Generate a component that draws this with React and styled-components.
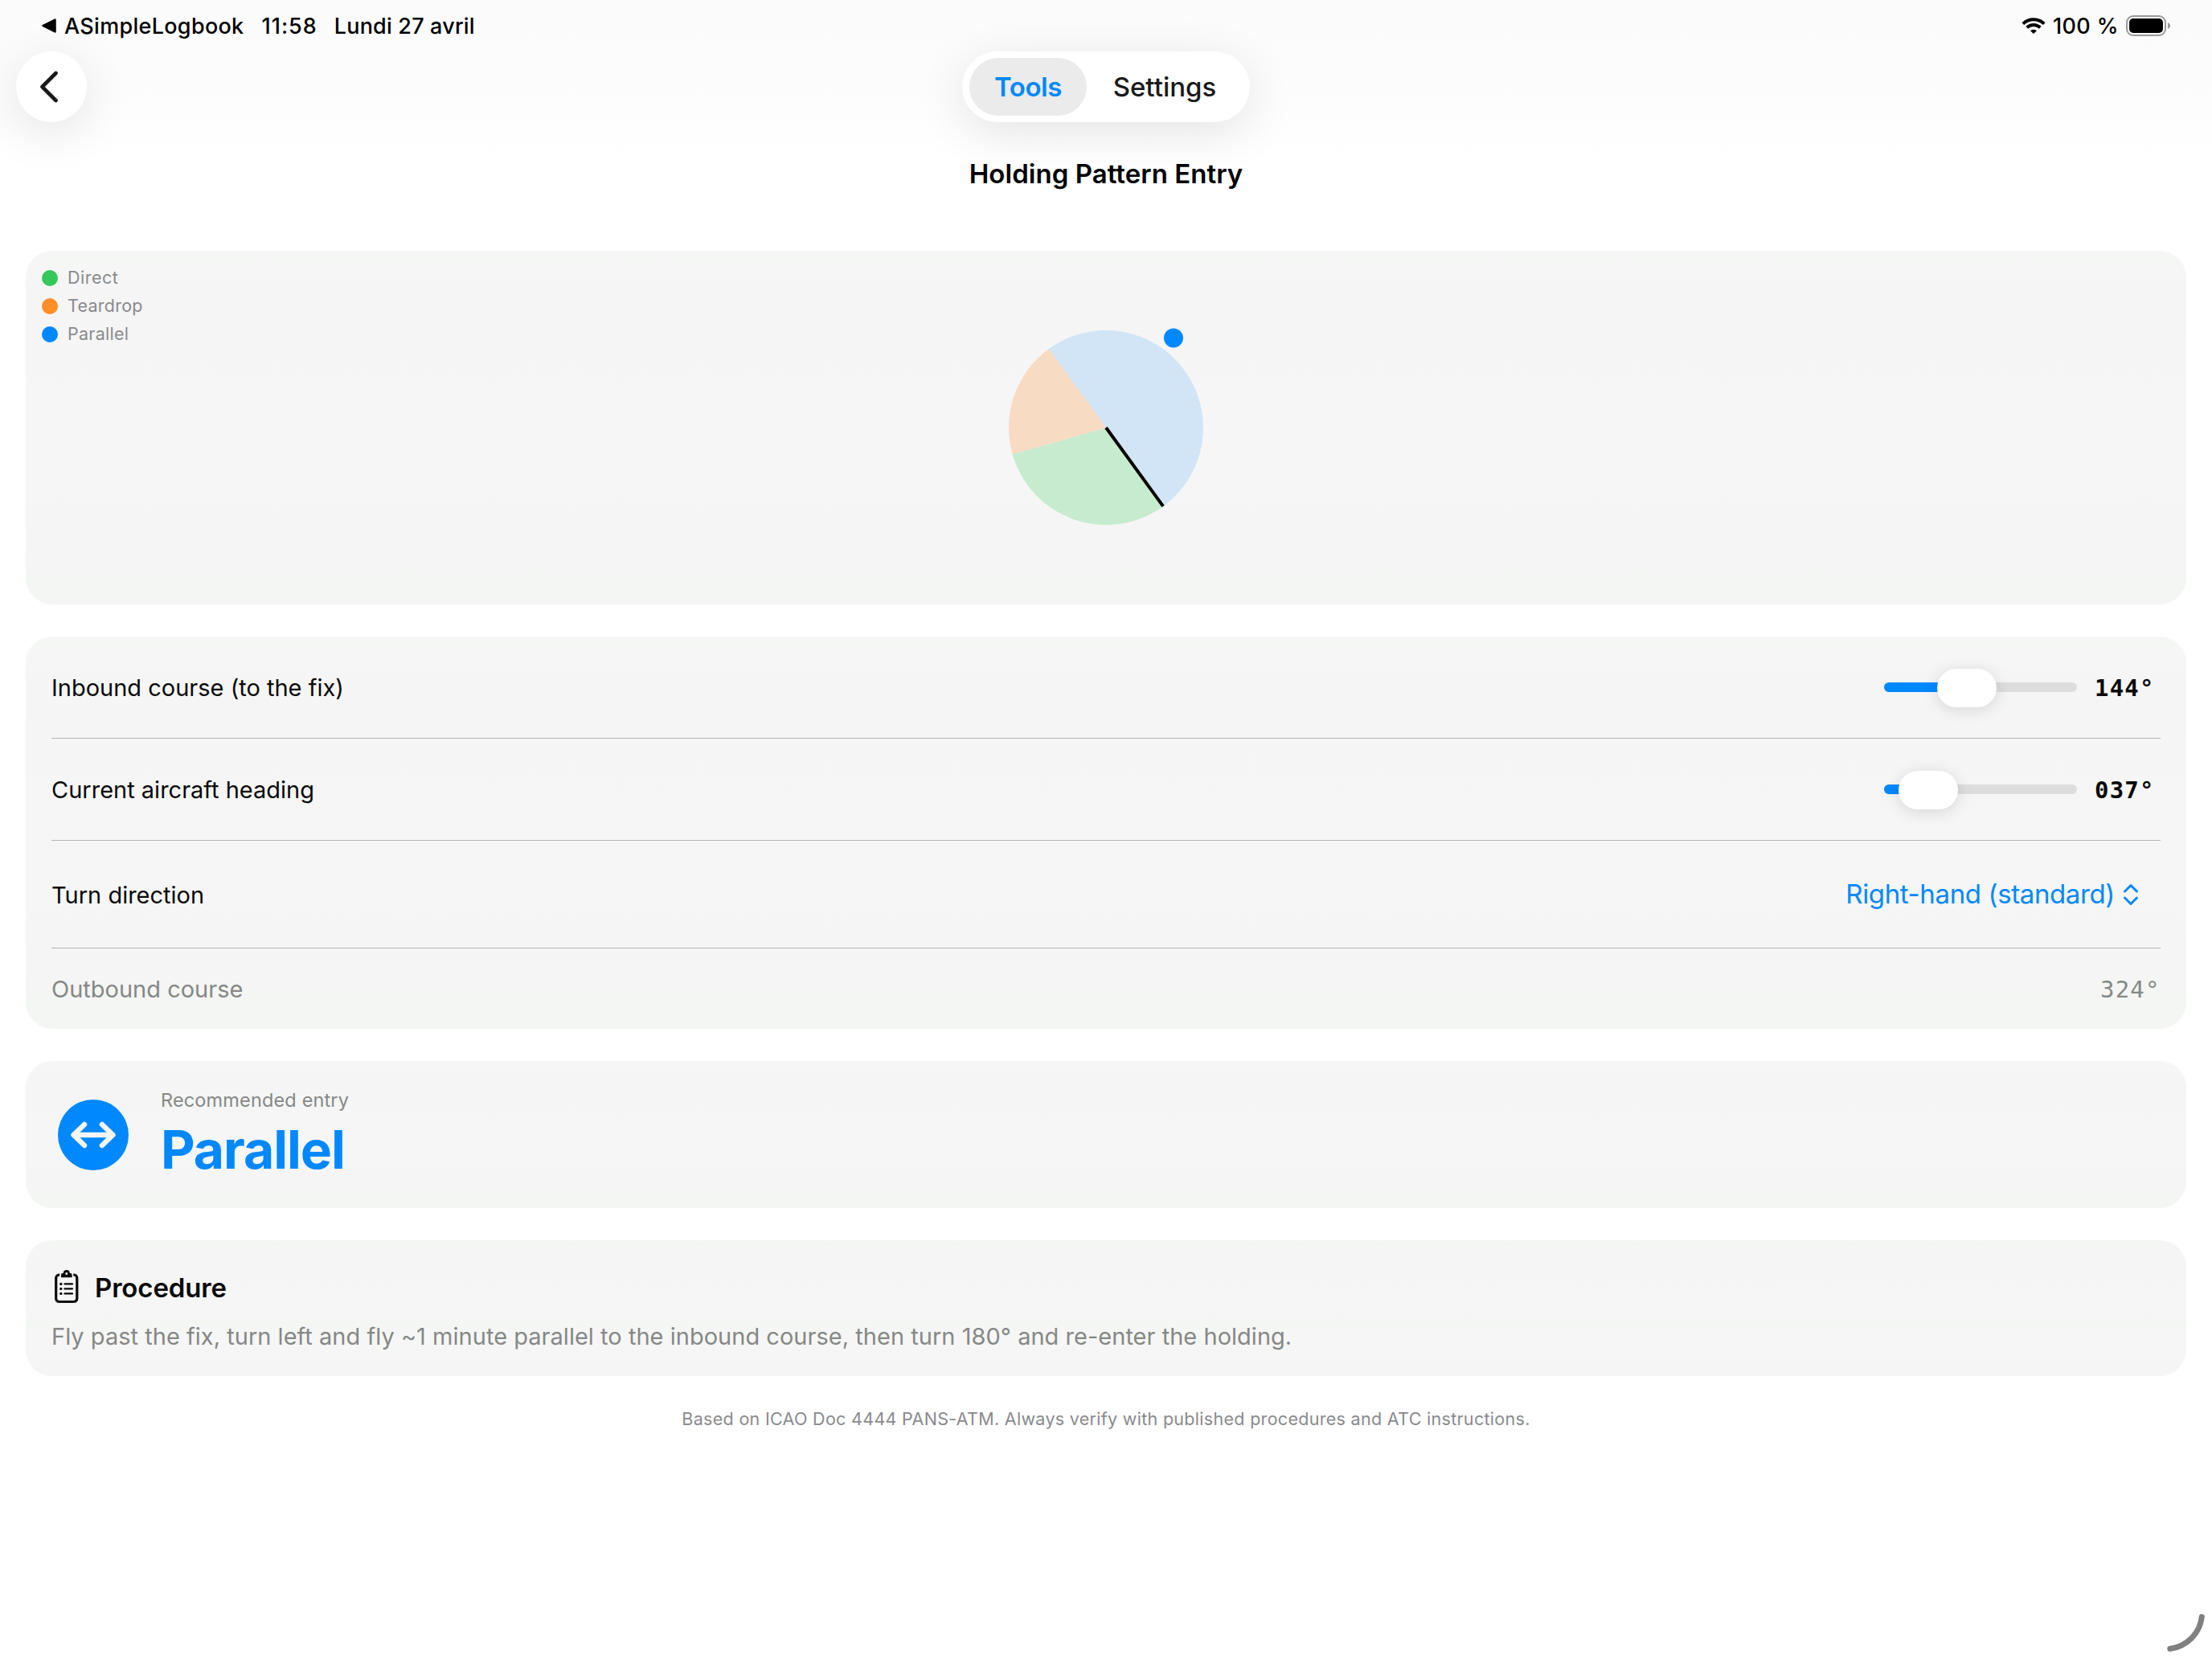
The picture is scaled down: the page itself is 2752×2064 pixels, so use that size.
import React from 'react';
import styled, { createGlobalStyle } from 'styled-components';

const GlobalStyle = createGlobalStyle`
    * {
        box-sizing: border-box;
    }

    body {
        margin: 0;
        background-color: #ffffff;
        font-family: Inter, "Liberation Sans", sans-serif;
        color: #0a0a0a;
    }
`;

const Screen = styled.div`
    width: 2752px;
    height: 2064px;
    position: relative;
    overflow: hidden;
    display: flex;
    flex-direction: column;
    background: linear-gradient(#fbfbfb 0, #fcfcfc 100px, #ffffff 200px);
`;

const Text = styled.span`
    padding-top: ${props => props.$drop ?? 2}px;
    font-size: ${props => props.$size || 29}px;
    font-weight: ${props => props.$weight || 400};
    letter-spacing: ${props => props.$track || 0}px;
    color: ${props => props.$color || 'inherit'};
    line-height: 1.2;
    white-space: nowrap;
`;

const StatusBar = styled.div`
    height: 64px;
    padding: 0 52px;
    display: flex;
    align-items: center;
    color: #000000;
`;

const StatusGroup = styled.div`
    display: flex;
    align-items: center;
    gap: ${props => props.$gap}px;
    margin-right: ${props => props.$after || 0}px;
`;

const Spacer = styled.div`
    flex: 1;
`;

const NavBar = styled.div`
    height: 88px;
    padding: 0 20px;
    display: grid;
    grid-template-columns: 1fr auto 1fr;
`;

const BackButton = styled.button`
    width: 88px;
    height: 88px;
    padding: 0 6px 0 0;
    border: none;
    border-radius: 50%;
    background-color: #ffffff;
    box-shadow: 0 14px 60px rgba(0, 0, 0, 0.1);
    display: flex;
    align-items: center;
    justify-content: center;
`;

const Segmented = styled.div`
    width: 358px;
    padding: 8px 9px;
    border-radius: 44px;
    background-color: #ffffff;
    box-shadow: 0 14px 60px rgba(0, 0, 0, 0.1);
    display: flex;
`;

const Segment = styled.div`
    width: ${props => props.$width}px;
    border-radius: 36px;
    background-color: ${props => props.$active ? '#ebebeb' : 'transparent'};
    color: ${props => props.$active ? '#0088ff' : '#1a1a1a'};
    display: flex;
    align-items: center;
    justify-content: center;
`;

const Title = styled.div`
    height: 128px;
    display: flex;
    align-items: center;
    justify-content: center;
    color: #000000;
`;

const Content = styled.div`
    padding: 32px 32px 0;
    display: flex;
    flex-direction: column;
`;

const Card = styled.div`
    height: ${props => props.$height}px;
    margin-bottom: 40px;
    border-radius: 33px;
    background: linear-gradient(#f5f7f5, #f5f5f5 12%, #f6f6f6 60%, #f5f5f5 82%, #f3f6f3);
`;

const DiagramCard = styled(Card)`
    position: relative;
    display: flex;
    align-items: center;
    justify-content: center;
`;

const Legend = styled.div`
    position: absolute;
    top: 24px;
    left: 20px;
    display: flex;
    flex-direction: column;
    gap: 15px;
`;

const LegendItem = styled.div`
    height: 20px;
    display: flex;
    align-items: center;
    gap: 12px;
`;

const Dot = styled.span`
    width: 20px;
    height: 20px;
    border-radius: 50%;
    background-color: ${props => props.$color};
`;

const FormCard = styled(Card)`
    padding: 0 32px;
`;

const Row = styled.div`
    height: ${props => props.$height}px;
    padding-right: ${props => props.$inset || 0}px;
    border-bottom: ${props => props.$last ? 'none' : '1px solid #b5b5b5'};
    color: ${props => props.$muted ? '#868886' : '#0a0a0a'};
    display: flex;
    align-items: center;
    justify-content: space-between;
`;

const RowControl = styled.div`
    display: flex;
    align-items: center;
    gap: ${props => props.$gap}px;
`;

const Track = styled.div`
    position: relative;
    width: 240px;
    height: 12px;
    border-radius: 6px;
    background-color: #dddddd;
`;

const Fill = styled.div`
    height: 12px;
    border-radius: 6px;
    background-color: #0088ff;
`;

const Thumb = styled.div`
    position: absolute;
    top: -17px;
    width: 74px;
    height: 48px;
    border-radius: 24px;
    background-color: #ffffff;
    box-shadow: 0 3px 20px rgba(0, 0, 0, 0.13);
`;

const Degrees = styled(Text)`
    width: 74px;
    font-family: "DejaVu Sans Mono", monospace;
    letter-spacing: 1.2px;
`;

const EntryCard = styled(Card)`
    padding: 0 40px;
    display: flex;
    align-items: center;
    gap: 40px;
`;

const EntryText = styled.div`
    display: flex;
    flex-direction: column;
    gap: 6px;
    color: #868886;
`;

const ProcedureCard = styled(Card)`
    padding: 36px 32px 0;
    margin-bottom: 0;
    background: linear-gradient(#f4f6f4, #f5f5f5 20%, #f6f6f6 45%, #f4f6f4 60%, #f6f6f6 75%, #f5f5f5);
`;

const ProcedureHead = styled.div`
    height: 44px;
    padding-left: 4px;
    display: flex;
    align-items: center;
    gap: 20px;
`;

const ProcedureBody = styled.div`
    margin-top: 21px;
    display: flex;
    color: #868886;
`;

const Footnote = styled.div`
    margin-top: 39px;
    display: flex;
    justify-content: center;
    color: #8a8a8e;
`;

const ResizeHandle = styled.svg`
    position: absolute;
    right: 0;
    bottom: 0;
`;

const legend = [
    { name: 'Direct', color: '#34c759', track: 0.5 },
    { name: 'Teardrop', color: '#ff8d28', track: 0.25 },
    { name: 'Parallel', color: '#0088ff', track: 0.25 },
];

const INBOUND = 144;
const HEADING = 37;

const point = (deg, r) => {
    const a = (deg - 90) * Math.PI / 180;
    return [150 + r * Math.cos(a), 150 + r * Math.sin(a)];
}

const sector = (from, to) => {
    const [x1, y1] = point(from, 121);
    const [x2, y2] = point(to, 121);
    return `M150 150 L${x1} ${y1} A121 121 0 0 1 ${x2} ${y2} Z`;
}

const HoldingDiagram = () => {
    const [lx, ly] = point(INBOUND, 121);
    const [hx, hy] = point(HEADING, 139.5);
    return (
        <svg width="300" height="300" viewBox="0 0 300 300">
            <path d={sector(INBOUND + 180, INBOUND + 360)} fill="#d1e5f6" />
            <path d={sector(INBOUND, INBOUND + 110)} fill="#c6ebcf" />
            <path d={sector(INBOUND + 110, INBOUND + 180)} fill="#f8dbc3" />
            <line x1="150" y1="150" x2={lx} y2={ly} stroke="#000" strokeWidth="4" />
            <circle cx={hx} cy={hy} r="12" fill="#0088ff" />
        </svg>
    )
}

const Slider = ({ value }) => {
    // the thumb stops slightly short of both ends of the track
    const left = Math.round(1.4 + value / 360 * 161.5);
    return (
        <Track>
            <Fill style={{ width: left + 37 }} />
            <Thumb style={{ left }} />
        </Track>
    )
}

const WifiIcon = () => (
    <svg width="30" height="22" viewBox="0 0 30 22" fill="none" stroke="#000" strokeWidth="4">
        <path d="M1.8 8.6 A19 19 0 0 1 28.2 8.6" />
        <path d="M6.7 13.3 A12 12 0 0 1 23.3 13.3" />
        <path d="M15 21 L11 17.2 A6 6 0 0 1 19 17.2 Z" fill="#000" stroke="none" />
    </svg>
)

const BatteryIcon = () => (
    <svg width="55" height="26" viewBox="0 0 55 26">
        <rect x="1" y="1" width="48" height="24" rx="8" fill="none" stroke="#9a9a9a" strokeWidth="2" />
        <rect x="4" y="4" width="42" height="18" rx="5" fill="#000" />
        <path d="M52 9 C56 10.5 56 15.5 52 17 Z" fill="#9a9a9a" />
    </svg>
)

const ClipboardIcon = () => (
    <svg width="30" height="42" viewBox="0 0 30 42">
        <path d="M6.2 6 H5.5 A4 4 0 0 0 1.7 10 V35.5 A4 4 0 0 0 5.7 39.5 H23.8 A4 4 0 0 0 27.8 35.5 V10 A4 4 0 0 0 24 6 H23.3" fill="none" stroke="#0a0a0a" strokeWidth="3.2" />
        <path fillRule="evenodd" fill="#0a0a0a" d="M8 9.3 V6 A2 2 0 0 1 10 4 H10.8 A4 4 0 0 1 18.8 4 H19.6 A2 2 0 0 1 21.6 6 V9.3 Z M14.8 2.9 A1.5 1.5 0 1 0 14.8 5.9 A1.5 1.5 0 1 0 14.8 2.9 Z" />
        <g stroke="#0a0a0a" strokeWidth="2.2" strokeLinecap="round">
            <path d="M12.5 17.4 H22 M12.5 23.4 H22 M12.5 29.4 H22" />
        </g>
        <g fill="#0a0a0a">
            <circle cx="7.8" cy="17.4" r="1.7" />
            <circle cx="7.8" cy="23.4" r="1.7" />
            <circle cx="7.8" cy="29.4" r="1.7" />
        </g>
    </svg>
)

const App = () => {
    return (
        <Screen>
            <GlobalStyle />
            <StatusBar>
                <StatusGroup $gap={10} $after={22}>
                    <svg width="18" height="18" viewBox="0 0 18 18">
                        <path d="M1.5 9 L16.5 1.5 V16.5 Z" fill="#000" stroke="#000" strokeWidth="2.5" strokeLinejoin="round" />
                    </svg>
                    <Text $size={27} $weight={500} $track={0.3}>ASimpleLogbook</Text>
                </StatusGroup>
                <StatusGroup $gap={21}>
                    <Text $size={27} $weight={500} $track={1}>11:58</Text>
                    <Text $size={27} $weight={500} $track={0.18}>Lundi 27 avril</Text>
                </StatusGroup>
                <Spacer />
                <StatusGroup $gap={9}>
                    <WifiIcon />
                    <Text $size={27} $weight={500} $track={0.4}>100 %</Text>
                    <BatteryIcon />
                </StatusGroup>
            </StatusBar>

            <NavBar>
                <BackButton>
                    <svg width="24" height="40" viewBox="0 0 24 40" fill="none" stroke="#1a1a1a" strokeWidth="4.6" strokeLinecap="round" strokeLinejoin="round">
                        <path d="M20.5 3 L3.5 20 L20.5 37" />
                    </svg>
                </BackButton>
                <Segmented>
                    <Segment $active $width={146}><Text $size={33} $weight={600} $track={-0.4}>Tools</Text></Segment>
                    <Segment $width={194}><Text $size={33} $weight={500}>Settings</Text></Segment>
                </Segmented>
            </NavBar>

            <Title>
                <Text $size={33} $weight={600} $track={0.03}>Holding Pattern Entry</Text>
            </Title>

            <Content>
                <DiagramCard $height={440}>
                    <Legend>
                        {legend.map((i) => {
                            return (
                                <LegendItem key={i.name}>
                                    <Dot $color={i.color} />
                                    <Text $drop={0} $size={21.5} $track={i.track} $color="#8a8a8e">{i.name}</Text>
                                </LegendItem>
                            )
                        })}
                    </Legend>
                    <HoldingDiagram />
                </DiagramCard>

                <FormCard $height={488}>
                    <Row $height={127} $inset={8}>
                        <Text>Inbound course (to the fix)</Text>
                        <RowControl $gap={22}>
                            <Slider value={INBOUND} />
                            <Degrees $weight={700}>144°</Degrees>
                        </RowControl>
                    </Row>
                    <Row $height={127} $inset={8}>
                        <Text>Current aircraft heading</Text>
                        <RowControl $gap={22}>
                            <Slider value={HEADING} />
                            <Degrees $weight={700}>037°</Degrees>
                        </RowControl>
                    </Row>
                    <Row $height={134} $inset={27}>
                        <Text $drop={3}>Turn direction</Text>
                        <RowControl $gap={10}>
                            <Text $drop={0} $size={33} $track={-0.38} $color="#0088ff">Right-hand (standard)</Text>
                            <svg width="20" height="28" viewBox="0 0 20 28" fill="none" stroke="#0088ff" strokeWidth="3" strokeLinecap="round" strokeLinejoin="round">
                                <path d="M2.5 10 L10 2.5 L17.5 10 M2.5 18 L10 25.5 L17.5 18" />
                            </svg>
                        </RowControl>
                    </Row>
                    <Row $height={100} $inset={1} $muted $last>
                        <Text>Outbound course</Text>
                        <Degrees>324°</Degrees>
                    </Row>
                </FormCard>

                <EntryCard $height={183}>
                    <svg width="88" height="88" viewBox="0 0 88 88">
                        <circle cx="44" cy="44" r="44" fill="#0088ff" />
                        <path d="M20 44 H68 M33 31 L19.5 44 L33 57 M55 31 L68.5 44 L55 57" fill="none" stroke="#f5f5f5" strokeWidth="6.4" strokeLinecap="round" strokeLinejoin="round" />
                    </svg>
                    <EntryText>
                        <Text $size={23.5} $track={0.15}>Recommended entry</Text>
                        <Text $size={66} $weight={700} $track={-1.1} $color="#0088ff">Parallel</Text>
                    </EntryText>
                </EntryCard>

                <ProcedureCard $height={169}>
                    <ProcedureHead>
                        <ClipboardIcon />
                        <Text $drop={3} $size={33} $weight={600} $track={-0.15}>Procedure</Text>
                    </ProcedureHead>
                    <ProcedureBody>
                        <Text $track={0.022}>Fly past the fix, turn left and fly ~1 minute parallel to the inbound course, then turn 180° and re-enter the holding.</Text>
                    </ProcedureBody>
                </ProcedureCard>

                <Footnote>
                    <Text $size={21.5} $track={0.3}>Based on ICAO Doc 4444 PANS-ATM. Always verify with published procedures and ATC instructions.</Text>
                </Footnote>
            </Content>

            <ResizeHandle width="60" height="60" viewBox="0 0 60 60" fill="none" stroke="#808080" strokeWidth="7" strokeLinecap="round">
                <path d="M7.8 47.2 A45.5 45.5 0 0 0 47.3 7.6" />
            </ResizeHandle>
        </Screen>
    )
}

export default App
